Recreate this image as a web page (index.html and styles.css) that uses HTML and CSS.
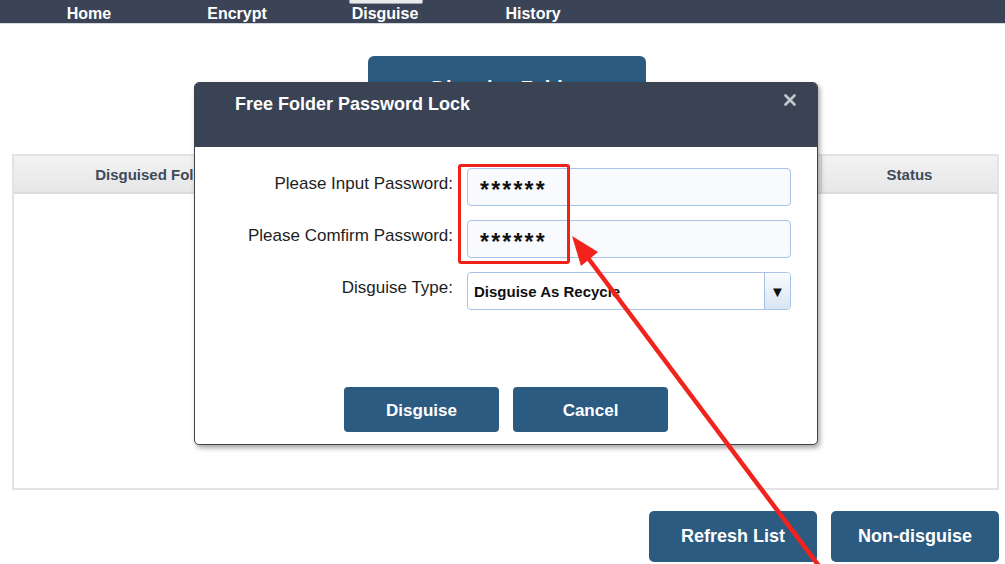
FILE: index.html
```html
<!DOCTYPE html>
<html>
<head>
<meta charset="utf-8">
<link rel="stylesheet" href="styles.css">
</head>
<body>
<nav class="nav">
  <a class="nav-item">Home</a>
  <a class="nav-item">Encrypt</a>
  <a class="nav-item active">Disguise</a>
  <a class="nav-item">History</a>
</nav>
<main class="main">
  <div class="top-row">
    <button class="btn btn-big">Disguise Folder</button>
  </div>
  <div class="table">
    <div class="thead">
      <div class="th th-folder">Disguised Folder</div>
      <div class="th th-mid">Disguise Type</div>
      <div class="th th-status">Status</div>
    </div>
    <div class="tbody"></div>
  </div>
  <div class="bottom-row">
    <button class="btn btn-foot">Refresh List</button>
    <button class="btn btn-foot">Non-disguise</button>
  </div>
</main>

<div class="dialog">
  <div class="dlg-head">
    <div class="dlg-title">Free Folder Password Lock</div>
    <svg class="dlg-close" width="12" height="12" viewBox="0 0 12 12"><path d="M1.5 1.5 L10.5 10.5 M10.5 1.5 L1.5 10.5" stroke="#c3c7ce" stroke-width="2.6" stroke-linecap="round"/></svg>
  </div>
  <div class="dlg-body">
    <div class="form">
      <label class="lbl">Please Input Password:</label>
      <div class="field"><span class="stars">******</span></div>
      <label class="lbl">Please Comfirm Password:</label>
      <div class="field"><span class="stars">******</span></div>
      <label class="lbl">Disguise Type:</label>
      <div class="field select"><span class="sel-text">Disguise As Recycle</span><span class="sel-arrow">&#9660;</span></div>
    </div>
    <div class="dlg-buttons">
      <button class="btn btn-dlg">Disguise</button>
      <button class="btn btn-dlg">Cancel</button>
    </div>
  </div>
</div>

<div class="highlight"></div>
<svg class="annot" width="1005" height="564" viewBox="0 0 1005 564">
  <line x1="588" y1="258" x2="822" y2="570" stroke="#f2231c" stroke-width="4.5"/>
  <polygon points="572,236 598,252 581,266" fill="#f2231c"/>
</svg>
</body>
</html>
```
FILE: styles.css
```css
* { box-sizing: border-box; }
html, body { margin: 0; padding: 0; }
body {
  width: 1005px;
  height: 564px;
  overflow: hidden;
  background: #ffffff;
  font-family: "Liberation Sans", Arial, sans-serif;
  position: relative;
}
.nav {
  height: 24px;
  background: #3b4456;
  border-bottom: 1px solid #d6d8dc;
  display: flex;
  padding-left: 15px;
}
.nav-item {
  width: 148px;
  text-align: center;
  color: #ffffff;
  font-weight: bold;
  font-size: 16px;
  line-height: 19px;
  padding-top: 4px;
  position: relative;
}
.nav-item.active::before {
  content: "";
  position: absolute;
  left: 38px;
  top: -3px;
  width: 72px;
  height: 5px;
  border: 1px solid #a0a4aa;
  border-radius: 0 0 2px 2px;
  background: #e9eaec;
}
.main {
  padding: 0 6px 0 12px;
}
.top-row {
  display: flex;
  justify-content: center;
  padding-top: 32px;
  padding-left: 2px;
}
.btn {
  border: none;
  background: #2b5b81;
  color: #ffffff;
  font-family: "Liberation Sans", Arial, sans-serif;
  font-weight: bold;
  padding: 0;
  cursor: pointer;
}
.btn-big {
  width: 278px;
  height: 56px;
  border-radius: 6px;
  font-size: 20px;
  padding-top: 8px;
}
.table {
  margin-top: 42px;
  height: 336px;
  border: 2px solid #e3e3e3;
  display: flex;
  flex-direction: column;
}
.thead {
  height: 38px;
  display: grid;
  grid-template-columns: 284px 1fr 176px;
  background: linear-gradient(#f2f2f2, #e7e7e7);
  border-bottom: 2px solid #dcdcdc;
}
.th {
  font-size: 15px;
  font-weight: bold;
  color: #3e4b5b;
  display: flex;
  align-items: center;
  justify-content: center;
}
.th-status { border-left: 1px solid #d6d6d6; }
.tbody { flex: 1; }
.bottom-row {
  display: flex;
  justify-content: flex-end;
  gap: 14px;
  margin-top: 21px;
}
.btn-foot {
  width: 168px;
  height: 51px;
  border-radius: 5px;
  font-size: 18px;
}

.dialog {
  position: absolute;
  left: 194px;
  top: 82px;
  width: 624px;
  height: 363px;
  border: 1.5px solid #3f434a;
  border-radius: 5px;
  background: #ffffff;
  overflow: hidden;
  box-shadow: 2px 3px 5px rgba(0,0,0,0.35);
}
.dlg-head {
  height: 64px;
  background: #3a4354;
  display: flex;
  justify-content: space-between;
  align-items: flex-start;
  padding: 10px 21px 0 40px;
}
.dlg-title {
  color: #ffffff;
  font-weight: bold;
  font-size: 18px;
  line-height: 22px;
}
.dlg-close {
  margin-top: 1px;
}
.dlg-body {
  padding-top: 21px;
}
.form {
  display: grid;
  grid-template-columns: 258px 324px;
  column-gap: 14px;
  row-gap: 14px;
}
.lbl {
  text-align: right;
  font-size: 17px;
  color: #1e1e1e;
  display: flex;
  align-items: center;
  justify-content: flex-end;
  height: 38px;
  padding-bottom: 7px;
  margin-left: -4px;
}
.field {
  height: 38px;
  border: 1px solid #a7c4e8;
  border-radius: 4px;
  background: #f8fafd;
  display: flex;
  align-items: center;
  padding-left: 12px;
}
.stars {
  font-size: 23px;
  font-weight: bold;
  letter-spacing: 2.2px;
  color: #111;
  padding-top: 6px;
  line-height: 20px;
}
.select {
  padding-left: 6px;
  background: #ffffff;
}
.sel-text {
  flex: 1;
  font-size: 15px;
  font-weight: bold;
  color: #111;
  padding-top: 1px;
}
.sel-arrow {
  width: 26px;
  height: 100%;
  border-left: 1px solid #a7c4e8;
  background: linear-gradient(#fafcff, #d8e5f4);
  display: flex;
  align-items: center;
  justify-content: center;
  font-size: 15px;
  color: #111;
  border-radius: 0 3px 3px 0;
}
.dlg-buttons {
  display: flex;
  justify-content: center;
  gap: 14px;
  margin-top: 77px;
}
.btn-dlg {
  width: 155px;
  height: 45px;
  border-radius: 4px;
  font-size: 17px;
  padding-top: 2px;
}

.highlight {
  position: absolute;
  left: 458px;
  top: 164px;
  width: 112px;
  height: 100px;
  border: 3px solid #ee2219;
  border-radius: 3px;
}
.annot {
  position: absolute;
  left: 0;
  top: 0;
  pointer-events: none;
}
```
